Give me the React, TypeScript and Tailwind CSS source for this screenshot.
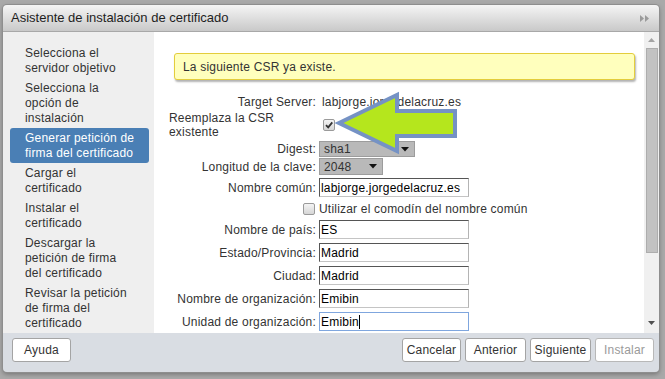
import React from "react";

const STEPS: { lines: string[]; active?: boolean }[] = [
  { lines: ["Selecciona el", "servidor objetivo"] },
  { lines: ["Selecciona la", "opción de", "instalación"] },
  { lines: ["Generar petición de", "firma del certificado"], active: true },
  { lines: ["Cargar el", "certificado"] },
  { lines: ["Instalar el", "certificado"] },
  { lines: ["Descargar la", "petición de firma", "del certificado"] },
  { lines: ["Revisar la petición", "de firma del", "certificado"] },
];

function Checkbox({ checked }: { checked?: boolean }) {
  return (
    <span className="flex h-[12px] w-[12px] items-center justify-center rounded-[2px] border border-[#9a9a9a] bg-gradient-to-b from-[#f4f4f4] to-[#d6d6d6]">
      {checked && (
        <svg width="10" height="10" viewBox="0 0 10 10">
          <path d="M2 5.2 L4.2 7.4 L8.3 2.4" fill="none" stroke="#333" strokeWidth="1.8" />
        </svg>
      )}
    </span>
  );
}

function Select({ value, width }: { value: string; width: string }) {
  return (
    <div
      className={`flex h-full items-center justify-between border border-[#9c9c9c] bg-[#b9b9b9] pl-[4px] pr-[5px] text-[#333] ${width}`}
    >
      <span>{value}</span>
      <svg width="8" height="5" viewBox="0 0 8 5">
        <polygon points="0,0 8,0 4,4.5" fill="#111" />
      </svg>
    </div>
  );
}

function TextBox({ value, focused }: { value: string; focused?: boolean }) {
  return (
    <div
      className={`flex h-[19px] w-[150px] items-center border pl-[1px] text-black ${
        focused
          ? "border-[#7fa6de]"
          : "border-t-[#555] border-l-[#555] border-r-[#b4b4b4] border-b-[#c4c4c4]"
      }`}
    >
      <span>{value}</span>
      {focused && <span className="h-[14px] w-px bg-black" />}
    </div>
  );
}

function Row({
  label,
  className,
  children,
}: {
  label: React.ReactNode;
  className: string;
  children: React.ReactNode;
}) {
  return (
    <div className={`flex items-center ${className}`}>
      <div className="w-[147px] text-right text-[#333]">{label}</div>
      <div className="ml-[3px] flex h-full items-center">{children}</div>
    </div>
  );
}

export default function App() {
  return (
    <div
      className="relative h-[379px] w-[665px] overflow-hidden bg-[#a9a9a9] pl-[3px] pt-[5px] text-[12px] tracking-[0.2px]"
      style={{ fontFamily: '"Liberation Sans", Arial, sans-serif' }}
    >
      <div className="flex h-[367px] w-[656px] flex-col overflow-hidden rounded-[4px] shadow-[0_0_0_1px_#8e8e8e,0_2px_5px_rgba(0,0,0,0.35)]">
        {/* Title bar */}
        <div className="flex h-[27px] items-center justify-between border-b border-[#a8a8a8] bg-gradient-to-b from-[#f5f5f5] to-[#c9c9c9] pl-[8px] pr-[9px]">
          <span className="text-[13px] tracking-normal text-[#1e1e1e]">
            Asistente de instalación de certificado
          </span>
          <svg width="10" height="7" viewBox="0 0 10 7">
            <polygon points="0,0 4,3.5 0,7" fill="#9a9a9a" />
            <polygon points="5,0 9,3.5 5,7" fill="#9a9a9a" />
          </svg>
        </div>

        {/* Body */}
        <div className="flex h-[301px]">
          <div className="w-[151px] bg-[#efefef] pl-[7px] pt-[11px]">
            {STEPS.map((step) => (
              <div
                key={step.lines.join(" ")}
                className={`w-[139px] whitespace-nowrap rounded-[3px] px-[15px] py-[2.5px] leading-[15px] ${
                  step.active ? "bg-[#4a7fb5] text-white" : "text-[#333]"
                }`}
              >
                {step.lines.map((l) => (
                  <div key={l}>{l}</div>
                ))}
              </div>
            ))}
          </div>

          <div className="flex-1 overflow-hidden bg-white pt-[21px]">
            <div className="ml-[20px] mr-[9px] flex h-[27px] items-center rounded-[3px] border border-[#e3cd3c] bg-[#ffffbd] pl-[8px] text-[#333] shadow-[1px_2px_2px_rgba(0,0,0,0.3)]">
              La siguiente CSR ya existe.
            </div>

            <div className="ml-[15px] mt-[15px] flex flex-col whitespace-nowrap">
              <Row label="Target Server:" className="h-[14px]">
                <span className="pl-[3px] text-[#333]">labjorge.jorgedelacruz.es</span>
              </Row>
              <div className="mt-[2px] flex h-[28px] items-center">
                <div className="w-[147px] leading-[14px] text-[#333]">
                  Reemplaza la CSR
                  <br />
                  existente
                </div>
                <div className="ml-[7px]">
                  <Checkbox checked />
                </div>
              </div>
              <Row label="Digest:" className="mt-[2px] h-[16px]">
                <Select value="sha1" width="w-[96px]" />
              </Row>
              <Row label="Longitud de la clave:" className="mt-[1px] h-[17px]">
                <Select value="2048" width="w-[64px]" />
              </Row>
              <Row label="Nombre común:" className="mt-[3px] h-[19px]">
                <TextBox value="labjorge.jorgedelacruz.es" />
              </Row>
              <Row
                label={
                  <div className="flex justify-end pr-[1px]">
                    <Checkbox />
                  </div>
                }
                className="mt-[2px] h-[20px]"
              >
                <span className="text-[#333]">Utilizar el comodín del nombre común</span>
              </Row>
              <Row label="Nombre de país:" className="mt-[1px] h-[19px]">
                <TextBox value="ES" />
              </Row>
              <Row label="Estado/Provincia:" className="mt-[4px] h-[19px]">
                <TextBox value="Madrid" />
              </Row>
              <Row label="Ciudad:" className="mt-[4px] h-[19px]">
                <TextBox value="Madrid" />
              </Row>
              <Row label="Nombre de organización:" className="mt-[4px] h-[19px]">
                <TextBox value="Emibin" />
              </Row>
              <Row label="Unidad de organización:" className="mt-[4px] h-[19px]">
                <TextBox value="Emibin" focused />
              </Row>
            </div>
          </div>

          {/* Scrollbar */}
          <div className="flex w-[15px] flex-col bg-[#f0f0f0]">
            <div className="flex h-[16px] items-center justify-center">
              <svg width="7" height="4" viewBox="0 0 7 4">
                <polygon points="0,4 7,4 3.5,0" fill="#a3a3a3" />
              </svg>
            </div>
            <div className="ml-[2px] h-[205px] w-[12px] border border-[#adadad] bg-[#c2c2c2]" />
            <div className="mb-[2px] mt-auto flex h-[16px] items-center justify-center">
              <svg width="7" height="4" viewBox="0 0 7 4">
                <polygon points="0,0 7,0 3.5,4" fill="#505050" />
              </svg>
            </div>
          </div>
        </div>

        {/* Footer */}
        <div className="flex h-[39px] items-start justify-between bg-[#d9dde3] pl-[9px] pr-[5px] pt-[5px]">
          <button className="h-[24px] w-[59px] rounded-[3px] border border-[#a4a4a4] bg-white text-[#333]">
            Ayuda
          </button>
          <div className="flex gap-[4px]">
            <button className="h-[24px] w-[59px] rounded-[3px] border border-[#a4a4a4] bg-white text-[#333]">
              Cancelar
            </button>
            <button className="h-[24px] w-[61px] rounded-[3px] border border-[#a4a4a4] bg-white text-[#333]">
              Anterior
            </button>
            <button className="h-[24px] w-[61px] rounded-[3px] border border-[#a4a4a4] bg-white text-[#333]">
              Siguiente
            </button>
            <button className="h-[24px] w-[59px] rounded-[3px] border border-[#b8b8b8] bg-white text-[#9a9a9a]">
              Instalar
            </button>
          </div>
        </div>
      </div>

      {/* Annotation arrow over the form */}
      <svg
        className="absolute left-[330px] top-[88px]"
        width="132"
        height="70"
        viewBox="330 88 132 70"
      >
        <polygon
          points="339,123 397,95 397,111 455,111 455,136 397,136 397,151"
          fill="#b5e61d"
          stroke="#7592c4"
          strokeWidth="4"
          strokeLinejoin="miter"
        />
      </svg>
    </div>
  );
}
